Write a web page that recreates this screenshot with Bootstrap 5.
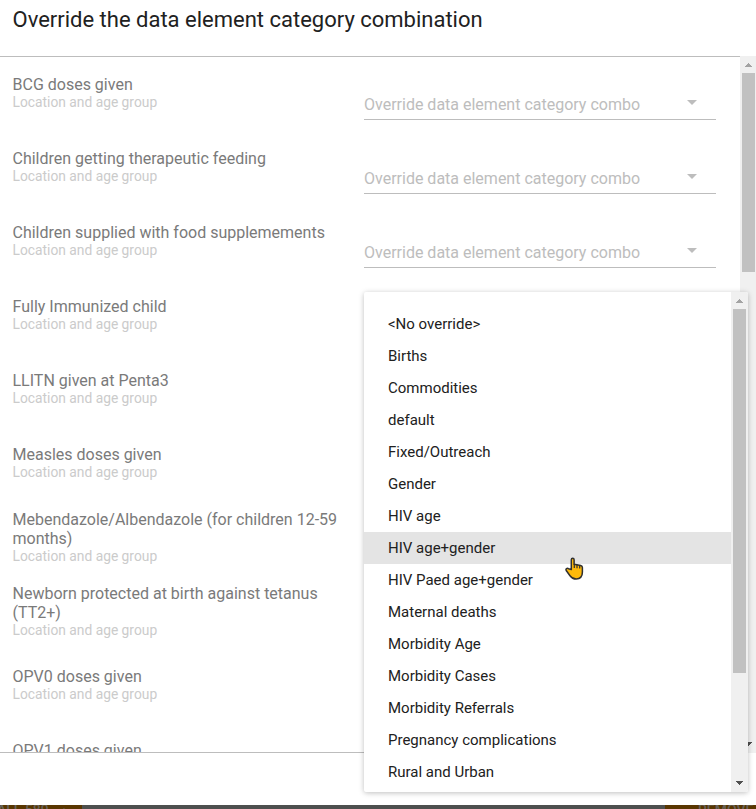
<!DOCTYPE html>
<html lang="en">
<head>
<meta charset="utf-8">
<meta name="viewport" content="width=device-width, initial-scale=1">
<title>Override category combination</title>
<link href="https://cdn.jsdelivr.net/npm/bootstrap@5.3.0/dist/css/bootstrap.min.css" rel="stylesheet">
<style>
html, body { height: 100%; }
body { font-family: Roboto, "Liberation Sans", sans-serif; color: #212121; background: #fff; }
.page { height: 809px; }
.dialog-head { height: 56px; padding: 6px 12.5px 0; }
.dialog-title { font-size: 22px; line-height: 28px; font-weight: 400; letter-spacing: 0; margin: 0; }
.dialog-body { height: 697px; }
.rows { border-top: 1px solid #bdbdbd; border-bottom: 1px solid #bdbdbd; }
.element-row { height: 74px; padding: 0 24px 0 12.5px; flex: none; }
.element-label { width: 351.5px; padding-right: 20px; padding-bottom: 1.5px; }
.element-name { font-size: 16px; line-height: 19px; color: #7a7a7a; }
.element-combo { font-size: 13.8px; line-height: 17px; color: #cbcbcb; }
.combo-field { height: 31px; margin-top: 21px; padding-top: 2px; padding-right: 19px; border-bottom: 1px solid #bdbdbd; font-size: 16px; line-height: 28px; color: #bdbdbd; }
.combo-field svg { margin-bottom: 5px; }
.scroll-track { background: #f0f0f0; flex: none; }
.track-outer { width: 16px; padding: 0 1px 0 2px; }
.track-inner { width: 17px; padding: 0 2px; }
.thumb { background: #c1c1c1; }
.track-outer .thumb { height: 199px; }
.track-inner .thumb { height: 364px; }
.arrow-cell { height: 17px; }
.arrow-cell.mt-auto { padding-bottom: 2px; }
.combo-menu { left: 364px; top: 292px; width: 384px; height: 500px; border-radius: 2px; box-shadow: 0 1px 6px rgba(0,0,0,.16), 0 1px 4px rgba(0,0,0,.1); }
.menu-options { padding-top: 16px; }
.menu-option { height: 32px; line-height: 32px; padding-left: 24px; font-size: 15px; color: #212121; }
.menu-option.hovered { background: #e4e4e4; }
.pointer { left: 565px; top: 557px; }
.dialog-foot { height: 52px; }
.page-behind { height: 4px; background: #4d4f4e; }
.behind-btn { background: #593600; color: #66625b; font-size: 14px; font-weight: 500; line-height: 10px; white-space: nowrap; }
.behind-left { width: 82px; text-indent: -3px; }
.behind-right { width: 91px; padding-left: 33px; }
</style>
<script src="https://cdn.jsdelivr.net/npm/bootstrap@5.3.0/dist/js/bootstrap.bundle.min.js"></script>
</head>
<body>
<main class="page position-relative overflow-hidden d-flex flex-column">
  <header class="dialog-head"><h1 class="dialog-title">Override the data element category combination</h1></header>
  <section class="dialog-body d-flex">
    <div class="rows flex-grow-1 overflow-hidden d-flex flex-column" id="rows"></div>
    <div class="scroll-track track-outer d-flex flex-column">
      <div class="arrow-cell d-flex align-items-center justify-content-center"><svg width="7" height="4" viewBox="0 0 7 4" shape-rendering="crispEdges"><path fill="#a3a3a3" d="M3 0h1v1h1v1h1v1h1v1H0V3h1V2h1V1h1z"/></svg></div>
      <div class="thumb"></div>
      <div class="arrow-cell mt-auto d-flex align-items-center justify-content-center"><svg width="7" height="4" viewBox="0 0 7 4" shape-rendering="crispEdges"><path fill="#505050" d="M0 0h7v1H6v1H5v1H4v1H3V3H2V2H1V1H0z"/></svg></div>
    </div>
  </section>
  <footer class="dialog-foot"></footer>
  <div class="page-behind d-flex justify-content-between overflow-hidden">
    <div class="behind-btn behind-left">ALL 589 &nbsp;&nbsp; ›</div>
    <div class="behind-btn behind-right">REMOVE</div>
  </div>

  <div class="combo-menu position-absolute bg-white d-flex overflow-hidden">
    <div class="menu-options flex-grow-1" id="options"></div>
    <div class="scroll-track track-inner d-flex flex-column">
      <div class="arrow-cell d-flex align-items-center justify-content-center"><svg width="7" height="4" viewBox="0 0 7 4" shape-rendering="crispEdges"><path fill="#a3a3a3" d="M3 0h1v1h1v1h1v1h1v1H0V3h1V2h1V1h1z"/></svg></div>
      <div class="thumb"></div>
      <div class="arrow-cell mt-auto d-flex align-items-center justify-content-center"><svg width="7" height="4" viewBox="0 0 7 4" shape-rendering="crispEdges"><path fill="#505050" d="M0 0h7v1H6v1H5v1H4v1H3V3H2V2H1V1H0z"/></svg></div>
    </div>
  </div>
  <svg class="pointer position-absolute" width="19" height="24" viewBox="0 0 19 24"><path d="M6.300 12.500V2.800c0-2 2.800-2 2.800 0v4.400l6.600 1.200c1.200.3 1.700 1 1.700 2.200v4.500c0 4-2.200 6.900-6.200 6.900-3 0-4.700-1.200-6.200-3.300L1.200 13.500c-.8-1.600.9-2.800 2.300-1.800z" fill="#fdb90b" stroke="#303030" stroke-width="1.500" stroke-linejoin="round"/><path d="M9.300 7v4M12 7.600v3.600M14.700 8.200v3.300" stroke="#303030" stroke-width="1.200"/></svg>
</main>
<script>
const names = ["BCG doses given", "Children getting therapeutic feeding", "Children supplied with food supplemements", "Fully Immunized child", "LLITN given at Penta3", "Measles doses given", "Mebendazole/Albendazole (for children 12-59 months)", "Newborn protected at birth against tetanus (TT2+)", "OPV0 doses given", "OPV1 doses given"];
// Rows from the fourth on have their field under the open menu.
const field = `<div class="combo-field flex-grow-1 d-flex justify-content-between align-items-center"><span>Override data element category combo</span><svg width="10" height="5" viewBox="0 0 10 5"><path fill="#bdbdbd" d="M0 0h10L5 5z"/></svg></div>`;
document.getElementById("rows").innerHTML = names.map((n, i) => `
  <div class="element-row d-flex align-items-center">
    <div class="element-label flex-shrink-0"><div class="element-name">${n}</div>${i < 9 ? '<div class="element-combo">Location and age group</div>' : '<div class="element-combo">&nbsp;</div>'}</div>
    ${i < 3 ? field : ""}
  </div>`).join("");
const options = ["&lt;No override&gt;", "Births", "Commodities", "default", "Fixed/Outreach", "Gender", "HIV age", "HIV age+gender", "HIV Paed age+gender", "Maternal deaths", "Morbidity Age", "Morbidity Cases", "Morbidity Referrals", "Pregnancy complications", "Rural and Urban"];
document.getElementById("options").innerHTML = options.map(o => `<div class="menu-option${o === "HIV age+gender" ? " hovered" : ""}">${o}</div>`).join("");
</script>
</body>
</html>
